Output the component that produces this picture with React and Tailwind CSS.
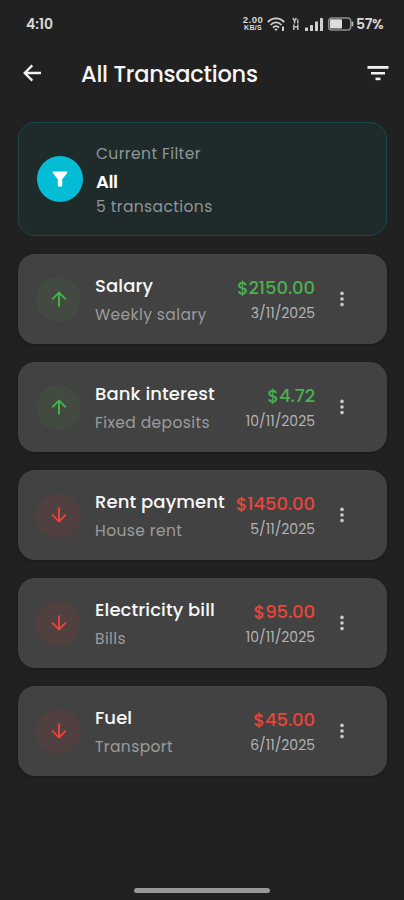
import React from 'react';

const transactions = [
  { id: 1, title: 'Salary',           category: 'Weekly salary',  amount: '$2150.00', date: '3/11/2025',  type: 'income' },
  { id: 2, title: 'Bank interest',    category: 'Fixed deposits', amount: '$4.72',    date: '10/11/2025', type: 'income' },
  { id: 3, title: 'Rent payment',     category: 'House rent',     amount: '$1450.00', date: '5/11/2025',  type: 'expense' },
  { id: 4, title: 'Electricity bill', category: 'Bills',          amount: '$95.00',   date: '10/11/2025', type: 'expense' },
  { id: 5, title: 'Fuel',             category: 'Transport',      amount: '$45.00',   date: '6/11/2025',  type: 'expense' },
];

function WifiIcon() {
  return (
    <svg width="19" height="15" viewBox="0 0 19 15" fill="none" stroke="#d0d0d0" strokeWidth="1.8" aria-hidden="true">
      <path d="M.8 5.2C5.4 .2 12.6 .2 17.2 5.2" />
      <path d="M3.6 8C6.8 4.6 11.2 4.6 14.4 8" />
      <path d="M6 10.6C7.8 8.8 10.2 8.8 12 10.6" />
      <path d="M7 11.8L9 14L11 11.8Z" fill="#d0d0d0" stroke="none" />
      <path d="M16 9.5V14" strokeWidth="2" />
    </svg>
  );
}

function SignalIcon() {
  return (
    <svg width="18" height="15" viewBox="0 0 18 15" fill="#cfcfcf" aria-hidden="true">
      <rect x="0" y="10.5" width="3" height="3.5" rx=".6" />
      <rect x="5" y="8" width="3" height="6" rx=".6" />
      <rect x="10" y="4.5" width="3" height="9.5" rx=".6" />
      <rect x="15" y="1" width="3" height="13" rx=".6" />
    </svg>
  );
}

function BatteryIcon() {
  return (
    <svg width="26" height="14" viewBox="0 0 26 14" aria-hidden="true">
      <rect x=".7" y=".9" width="22" height="12" rx="3" fill="none" stroke="#8d8d8d" strokeWidth="1.5" />
      <rect x="2" y="2.2" width="12" height="9.4" rx="1" fill="#dcdcdc" />
      <path d="M24.4 4.5V9.3" stroke="#b5b5b5" strokeWidth="1.8" />
    </svg>
  );
}

function StatusBar() {
  return (
    <div className="h-12 pl-[26px] pr-[19px] flex items-center justify-between text-[#d8d8d8]">
      <span className="text-[14px] font-semibold">4:10</span>
      <div className="flex items-center">
        <div className="w-[22px] mr-[3px] flex flex-col items-center font-['Liberation_Sans',sans-serif] font-bold">
          <span className="text-[9.5px] leading-[8px] tracking-[0.5px]">2.00</span>
          <span className="text-[7px] leading-[8px] tracking-[0.3px]">KB/S</span>
        </div>
        <WifiIcon />
        <svg className="ml-[6px] mr-[5px]" width="8" height="14" viewBox="0 0 8 14" fill="none" stroke="#bdbdbd" strokeWidth="1.5" aria-hidden="true">
          <path d="M.8 1L2.6 4L4.4 1M2.6 4V6.5M5.8 2.5V6.5M1.8 7.5V13M5.8 7.5V13M1.8 10H5.8" />
        </svg>
        <SignalIcon />
        <div className="ml-[5px] flex items-center gap-[2px]">
          <BatteryIcon />
          <span className="w-[29px] text-[14px] font-semibold tracking-[-0.3px]">57%</span>
        </div>
      </div>
    </div>
  );
}

function Header() {
  return (
    <header className="h-[52px] pl-[22px] pr-[15px] flex items-center">
      <svg className="mb-[2px]" width="20" height="20" viewBox="0 0 20 20" fill="none" stroke="#f2f2f2" strokeWidth="2.3" aria-hidden="true">
        <path d="M19 10H2.8M10.3 2.4L2.7 10L10.3 17.6" />
      </svg>
      <h1 className="ml-[39px] flex-1 text-[22.5px] leading-none font-medium text-[#f5f5f5] tracking-[-0.25px]">All Transactions</h1>
      <svg width="22" height="16" viewBox="0 0 22 16" fill="#f2f2f2" className="mb-[2px]" aria-hidden="true">
        <rect x="0.5" y="1" width="21" height="2.8" />
        <rect x="4" y="7" width="14" height="2.5" />
        <rect x="8.5" y="12.6" width="5" height="2.6" />
      </svg>
    </header>
  );
}

function FilterCard() {
  return (
    <section className="h-[114px] pl-[18px] flex items-center rounded-[17px] border border-[#18494c] bg-[#1f2a2b]">
      <div className="w-[46px] h-[46px] rounded-full bg-[#05bcd6] flex items-center justify-center">
        <svg width="16" height="16" viewBox="0 0 16 16" fill="#ffffff" aria-hidden="true">
          <path d="M1.3 .5H14.7Q16 .8 15.2 2L10.2 8.2V14.4Q10.2 15.6 9 15.6H7Q5.8 15.6 5.8 14.4V8.2L.8 2Q0 .8 1.3 .5Z" />
        </svg>
      </div>
      <div className="ml-[13px] mb-px flex flex-col">
        <span className="text-[15.5px] leading-[28px] text-[#8e9696] tracking-[0.4px]">Current Filter</span>
        <span className="text-[18px] leading-[28px] font-semibold text-white tracking-[-0.5px]">All</span>
        <span className="text-[15.5px] leading-[21px] text-[#8e9696] tracking-[0.4px]">5 transactions</span>
      </div>
    </section>
  );
}

function TransactionCard({ item }) {
  const income = item.type === 'income';

  return (
    <li className="h-[90px] pl-[18px] pr-[43px] flex items-center rounded-[17px] bg-[#424242] shadow-[0_1px_3px_rgba(0,0,0,0.35)]">
      <div className={`w-[45px] h-[45px] shrink-0 rounded-full flex items-center justify-center ${income ? 'bg-[#424a42]' : 'bg-[#50403f]'}`}>
        <svg
          className={income ? 'text-[#43b549]' : 'rotate-180 text-[#ee4438]'}
          width="16" height="16" viewBox="0 0 16 16" fill="none" stroke="currentColor" strokeWidth="1.9" aria-hidden="true"
        >
          <path d="M8 15.5V1.8M1.2 8.3L8 1.5L14.8 8.3" />
        </svg>
      </div>
      <div className="ml-[14px] mt-[3px] flex-1 flex flex-col whitespace-nowrap">
        <span className="text-[18px] leading-[28px] font-medium text-[#f7f7f7] tracking-[0.1px]">{item.title}</span>
        <span className="text-[15.5px] leading-[29px] text-[#9b9b9b] tracking-[0.4px]">{item.category}</span>
      </div>
      <div className="mt-px flex flex-col items-end whitespace-nowrap">
        <span className={`text-[18px] leading-[27px] font-medium tracking-[-0.1px] ${income ? 'text-[#4caf50]' : 'text-[#ea4439]'}`}>{item.amount}</span>
        <span className="text-[14px] leading-[24px] text-[#b3b3b3]">{item.date}</span>
      </div>
      <svg className="ml-[25px] shrink-0" width="4" height="16" viewBox="0 0 4 16" fill="#cbcbcb" aria-hidden="true">
        <circle cx="2" cy="2.4" r="1.8" />
        <circle cx="2" cy="8" r="1.8" />
        <circle cx="2" cy="13.6" r="1.8" />
      </svg>
    </li>
  );
}

export default function App() {
  return (
    <div className="w-[404px] h-[900px] flex flex-col overflow-hidden bg-[#212121] font-['Poppins','Inter',sans-serif]">
      <StatusBar />
      <Header />
      <main className="flex-1 pt-[22px] pl-[18px] pr-[17px]">
        <FilterCard />
        <ul className="mt-[18px] flex flex-col gap-[18px]">
          {transactions.map((item) => (
            <TransactionCard key={item.id} item={item} />
          ))}
        </ul>
      </main>
      <div className="mb-[7px] w-[136px] h-[5px] self-center rounded-full bg-[#999999]" />
    </div>
  );
}
